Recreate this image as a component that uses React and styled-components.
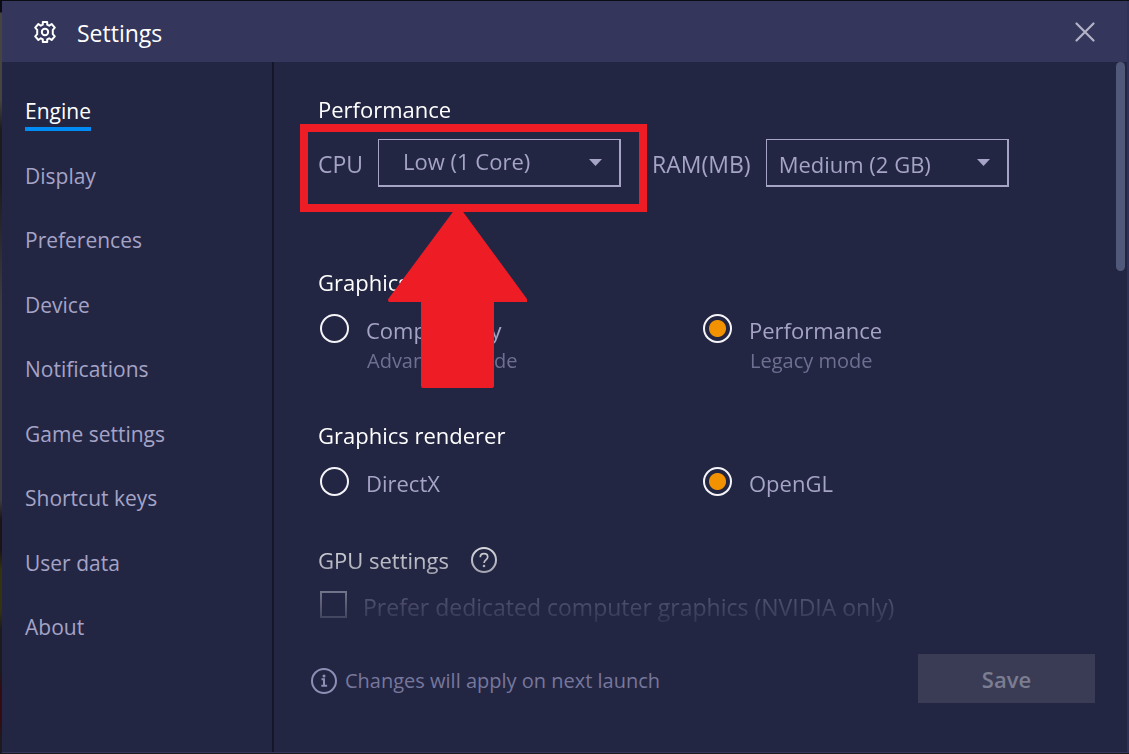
import React, { useState } from "react";
import styled, { createGlobalStyle } from "styled-components";

const GlobalStyle = createGlobalStyle`
  *, *::before, *::after { box-sizing: border-box; }
  body {
    margin: 0;
    background: linear-gradient(#0b0b14 0 12px, #45443f 13px 100px, #1b1b1e 130px 180px, #3c3c40 300px 500px, #1b1214 520px 550px, #35330f 570px 610px, #1b1a1e 630px 670px, #330b12 690px 720px, #1c1a1e 740px);
    font-family: "Open Sans", "Noto Sans", sans-serif;
    font-size: 22px;
    line-height: 30px;
    color: #a5a3c6;
  }
  button, select, input { font: inherit; color: inherit; margin: 0; }
`;

const Window = styled.div`
  display: flex;
  flex-direction: column;
  min-height: calc(100vh - 2px);
  margin: 1px 0 1px 2px;
  background: #232643;
  border-right: 2px solid #2f3159;
  border-bottom: 1px solid #34365c;
`;

const TitleBar = styled.header`
  display: flex;
  align-items: center;
  gap: 20px;
  height: 61px;
  padding: 0 31px;
  background: #34365c;
  color: #fff;
`;

const Title = styled.h1`
  flex: 1;
  margin: 0;
  padding-top: 3px;
  font-size: 23px;
  font-weight: 400;
`;

const CloseButton = styled.button`
  display: flex;
  padding: 0;
  border: 0;
  background: none;
  color: #b3b3c6;
  cursor: pointer;
`;

const Body = styled.div`
  display: flex;
  flex: 1;
`;

const Sidebar = styled.nav`
  display: flex;
  flex: 0 0 272px;
  padding: 34px 20px 105px 23px;
  border-right: 2px solid #14162a;
`;

const NavList = styled.ul`
  display: flex;
  flex-direction: column;
  justify-content: space-between;
  margin: 0;
  padding: 0;
  list-style: none;
`;

const NavLink = styled.a`
  display: inline-block;
  vertical-align: top;
  padding-bottom: 1px;
  font-size: 21px;
  border-bottom: 4px solid ${(p) => (p.$active ? "#008bf5" : "transparent")};
  color: ${(p) => (p.$active ? "#fff" : "inherit")};
  text-decoration: none;
`;

const Main = styled.main`
  display: flex;
  flex: 1;
  flex-direction: column;
  min-width: 0;
`;

const Panel = styled.div`
  flex: 1;
  padding: 32px 16px 0 44px;
  mask-image: linear-gradient(to top, transparent 4px, #000 112px);
`;

const Section = styled.section`
  margin-bottom: ${(p) => p.$gap}px;
`;

const Heading = styled.h2`
  display: flex;
  align-items: center;
  gap: 22px;
  margin: 0 0 ${(p) => p.$space}px;
  font-size: 22px;
  font-weight: 400;
  color: #fff;
`;

const FieldRow = styled.div`
  display: flex;
  gap: 31px;
`;

const Field = styled.div`
  position: relative;
  display: flex;
  align-items: center;
  gap: 15px;
`;

const FieldLabel = styled.label`
  padding-top: 2px;
  font-size: 23px;
`;

const SelectBox = styled.div`
  position: relative;
  width: 243px;
`;

const Select = styled.select`
  display: block;
  width: 100%;
  height: 48px;
  padding: ${(p) => p.$pad};
  appearance: none;
  border: 1px solid #a5a3c6;
  border-right-width: 2px;
  border-bottom-width: 2px;
  border-radius: 0;
  background: #232643;
`;

const Caret = styled.svg`
  position: absolute;
  top: 20px;
  right: 19px;
  pointer-events: none;
`;

const Highlight = styled.div`
  position: absolute;
  inset: -15px -26px -25px -18px;
  border: 8px solid #ee1c25;
  pointer-events: none;
`;

const Arrow = styled.svg`
  position: absolute;
  top: 70px;
  left: 70px;
  z-index: 1;
  pointer-events: none;
`;

const Options = styled.div`
  display: grid;
  grid-template-columns: 383px 1fr;
  padding-left: 2px;
`;

const Option = styled.div`
  display: flex;
  align-items: flex-start;
  gap: 17px;
`;

const Radio = styled.input`
  flex: none;
  width: 29px;
  height: 29px;
  appearance: none;
  border: 2px solid #f4f4f8;
  border-radius: 50%;
  &:checked {
    background: radial-gradient(circle, #f39200 8px, transparent 9px);
  }
`;

const OptionLabel = styled.label`
  display: block;
  padding-top: 1px;
`;

const CheckLabel = styled(OptionLabel)`
  font-size: 23px;
`;

const Hint = styled.small`
  display: block;
  padding: 1px 0 0 1px;
  font-size: 20px;
  color: #6f6f92;
`;

const CheckRow = styled.div`
  display: flex;
  align-items: flex-start;
  gap: 16px;
  padding-left: 2px;
`;

const Checkbox = styled.input`
  flex: none;
  width: 27px;
  height: 27px;
  appearance: none;
  border: 2px solid #e4e4ee;
`;

const HelpButton = styled.button`
  display: flex;
  padding: 0;
  border: 0;
  background: none;
  color: #fff;
`;

const Footer = styled.footer`
  display: flex;
  align-items: center;
  justify-content: space-between;
  padding: 14px 21px 49px 37px;
`;

const Note = styled.p`
  display: flex;
  align-items: center;
  gap: 8px;
  margin: 0;
  padding-top: 5px;
  font-size: 20px;
  color: #77779c;
`;

const SaveButton = styled.button`
  width: 177px;
  height: 49px;
  padding: 0;
  border: 0;
  background: #3a3c56;
  color: #7c7d90;
  font-weight: 600;
`;

const Scrollbar = styled.div`
  flex: none;
  width: 9px;
  height: 209px;
  margin-right: 2px;
  border-radius: 5px;
  background: #50597a;
`;

const GearIcon = () => (
  <svg width="24" height="24" viewBox="0 0 24 24" fill="none" stroke="currentColor" strokeWidth="2" strokeLinejoin="round" aria-hidden="true">
    <path d="M9.800 2h4.400v2.700l2 1 2.400-1.700 3.200 3.600-2 2.200v4.400l2 2.200-3.200 3.600-2.400-1.700-2 1V22H9.800v-2.700l-2-1L5.400 20l-3.200-3.600 2-2.200V9.800l-2-2.200L5.400 4l2.400 1.700 2-1z" />
    <circle cx="12" cy="12" r="3.200" />
  </svg>
);

const CloseIcon = () => (
  <svg width="22" height="22" viewBox="0 0 22 22" stroke="currentColor" strokeWidth="2.200" strokeLinecap="round" aria-hidden="true">
    <path d="M2.500 2.500l17 17M19.500 2.500l-17 17" />
  </svg>
);

const HelpIcon = () => (
  <svg width="26" height="26" viewBox="0 0 26 26" fill="none" stroke="currentColor" strokeWidth="2" aria-hidden="true">
    <circle cx="13" cy="13" r="12" />
    <path d="M9.300 10.200c0-2.200 1.600-3.500 3.700-3.500s3.700 1.300 3.700 3.300c0 2.800-3.600 2.900-3.600 6" strokeWidth="1.700" />
    <circle cx="13" cy="19" r="1.300" fill="currentColor" stroke="none" />
  </svg>
);

const InfoIcon = () => (
  <svg width="26" height="26" viewBox="0 0 26 26" fill="none" stroke="#8f8fb6" strokeWidth="2" aria-hidden="true">
    <circle cx="13" cy="13" r="12" />
    <path d="M10.500 11.300H13V17.800M10.300 17.800h5.800" />
    <circle cx="13" cy="8" r="1.500" fill="#8f8fb6" stroke="none" />
  </svg>
);

const navItems = ["Engine", "Display", "Preferences", "Device", "Notifications", "Game settings", "Shortcut keys", "User data", "About"];

function SelectField({ id, label, options, pad, children }) {
  return (
    <Field>
      <FieldLabel htmlFor={id}>{label}</FieldLabel>
      <SelectBox>
        <Select id={id} $pad={pad}>
          {options.map((o) => (
            <option key={o}>{o}</option>
          ))}
        </Select>
        <Caret width="13" height="7" viewBox="0 0 13 7" aria-hidden="true">
          <path d="M0 0h13L6.500 7z" fill="#a5a3c6" />
        </Caret>
      </SelectBox>
      {children}
    </Field>
  );
}

function RadioGroup({ name, options, initial }) {
  const [value, setValue] = useState(initial);
  return (
    <Options role="radiogroup" aria-label={name}>
      {options.map(({ label, hint }) => {
        const id = `${name}-${label}`;
        return (
          <Option key={label}>
            <Radio type="radio" id={id} name={name} checked={value === label} onChange={() => setValue(label)} />
            <div>
              <OptionLabel htmlFor={id}>{label}</OptionLabel>
              {hint && <Hint>{hint}</Hint>}
            </div>
          </Option>
        );
      })}
    </Options>
  );
}

export default function App() {
  return (
    <>
      <GlobalStyle />
      <Window>
        <TitleBar>
          <GearIcon />
          <Title>Settings</Title>
          <CloseButton aria-label="Close">
            <CloseIcon />
          </CloseButton>
        </TitleBar>
        <Body>
          <Sidebar>
            <NavList>
              {navItems.map((item, i) => (
                <li key={item}>
                  <NavLink href="#" $active={i === 0}>{item}</NavLink>
                </li>
              ))}
            </NavList>
          </Sidebar>
          <Main>
            <Panel>
              <Section $gap={80}>
                <Heading $space={15}>Performance</Heading>
                <FieldRow>
                  <SelectField id="cpu" label="CPU" options={["Low (1 Core)", "Medium (2 Cores)", "High (4 Cores)"]} pad="0 40px 4px 24px">
                    <Highlight />
                    <Arrow width="140" height="180" viewBox="0 0 140 180" aria-hidden="true">
                      <path d="M67 0h6l66 90v3h-33v84q0 2-2 2H35q-2 0-2-2V93H1q-2-2 0-4z" fill="#ee1c25" />
                    </Arrow>
                  </SelectField>
                  <SelectField id="ram" label="RAM(MB)" options={["Medium (2 GB)", "Low (1 GB)", "High (4 GB)"]} pad="3px 40px 0 12px" />
                </FieldRow>
              </Section>
              <Section $gap={44}>
                <Heading $space={17}>Graphics engine</Heading>
                <RadioGroup
                  name="engine"
                  initial="Performance"
                  options={[
                    { label: "Compatibility", hint: "Advanced mode" },
                    { label: "Performance", hint: "Legacy mode" },
                  ]}
                />
              </Section>
              <Section $gap={47}>
                <Heading $space={17}>Graphics renderer</Heading>
                <RadioGroup name="renderer" initial="OpenGL" options={[{ label: "DirectX" }, { label: "OpenGL" }]} />
              </Section>
              <Section $gap={0}>
                <Heading $space={16}>
                  GPU settings
                  <HelpButton aria-label="Help">
                    <HelpIcon />
                  </HelpButton>
                </Heading>
                <CheckRow>
                  <Checkbox type="checkbox" id="gpu" />
                  <CheckLabel htmlFor="gpu">Prefer dedicated computer graphics (NVIDIA only)</CheckLabel>
                </CheckRow>
              </Section>
            </Panel>
            <Footer>
              <Note>
                <InfoIcon />
                Changes will apply on next launch
              </Note>
              <SaveButton disabled>Save</SaveButton>
            </Footer>
          </Main>
          <Scrollbar />
        </Body>
      </Window>
    </>
  );
}
